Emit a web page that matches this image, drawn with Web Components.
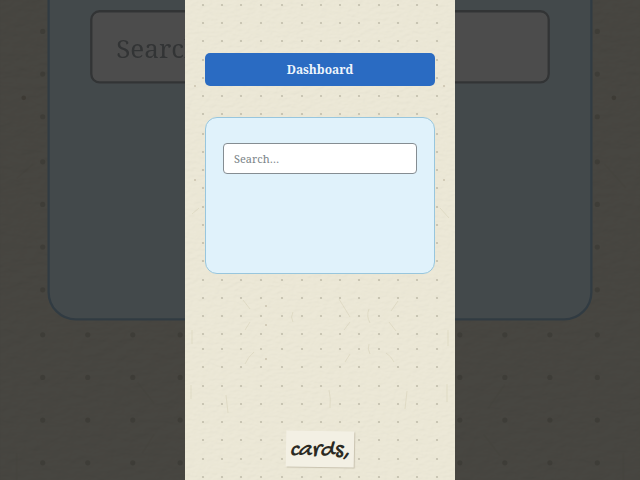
<!DOCTYPE html>
<html lang="en">
<head>
<meta charset="utf-8">
<meta name="viewport" content="width=device-width, initial-scale=1">
<title>Dashboard</title>
<style>
  body {
    margin: 0;
    font-family: "Noto Serif", "Droid Serif", "DejaVu Serif Condensed", "DejaVu Serif", serif;
  }
</style>
</head>
<body>
<video-stage>
  <portrait-frame slot="backdrop" inert aria-hidden="true">
    <search-card label="Search background"></search-card>
  </portrait-frame>
  <portrait-frame>
    <title-button slot="title">Dashboard</title-button>
    <search-card label="Search"></search-card>
    <caption-note slot="caption">cards,</caption-note>
  </portrait-frame>
</video-stage>

<script>
const define = (name, html, setup) => {
  const template = document.createElement("template")
  template.innerHTML = html

  customElements.define(name, class extends HTMLElement {
    constructor() {
      super()
      this.attachShadow({ mode: "open" })
      this.shadowRoot.appendChild(template.content.cloneNode(true))
    }

    connectedCallback() {
      if (setup) setup(this)
    }
  })
}

// a portrait frame in the middle, a dark enlarged copy behind it
define("video-stage", /*html*/ `
  <style>
    :host {
      display: flex;
      justify-content: center;
      position: relative;
      height: 100vh;
      overflow: hidden;
      background-color: #45433e;
    }
    .stage__backdrop {
      position: absolute;
      inset: 0;
      display: flex;
      justify-content: center;
      transform: scale(2.37);
      filter: brightness(.3);
      --dot-opacity: .3;
      --fibre-opacity: .15;
      --line-color: #a3c6db;
      --field-color: #a8adb0;
    }
    .stage__front {
      display: flex;
      position: relative;
    }
  </style>
  <div class="stage__backdrop"><slot name="backdrop"></slot></div>
  <main class="stage__front"><slot></slot></main>
`)

define("portrait-frame", /*html*/ `
  <style>
    :host {
      display: block;
      position: relative;
      height: 100vh;
      aspect-ratio: 9 / 16;
      overflow: hidden;
    }
    paper-sheet {
      position: absolute;
      inset: 0;
    }
    .frame {
      position: relative;
      box-sizing: border-box;
      display: flex;
      flex-direction: column;
      gap: 31px;
      height: 100%;
      padding: 53px 20px 13px;
    }
    .frame__title {
      min-height: 33px;
    }
    .frame__caption {
      display: flex;
      justify-content: center;
      margin-top: auto;
    }
  </style>
  <paper-sheet></paper-sheet>
  <div class="frame">
    <div class="frame__title"><slot name="title"></slot></div>
    <slot></slot>
    <div class="frame__caption"><slot name="caption"></slot></div>
  </div>
`)

// dotted paper, the dots are a little uneven like the print
const dotColumns = [18, 37, 56, 76, 97, 117, 136, 155, 174, 194, 213, 232, 252]
const dotRows = [5, 23, 41, 60, 78, 96, 114, 134, 152, 170, 188, 207, 225, 243, 261, 280, 298, 316, 334, 349, 367, 386, 404, 422, 440, 459, 477]

define("paper-sheet", /*html*/ `
  <style>
    :host {
      display: block;
      background-color: #ebe7d7;
    }
    svg {
      display: block;
      width: 100%;
      height: 100%;
    }
    #dots {
      opacity: var(--dot-opacity, .45);
    }
    #fibres {
      opacity: var(--fibre-opacity, .6);
    }
  </style>
  <svg viewBox="0 0 270 480" preserveAspectRatio="xMidYMid slice" aria-hidden="true">
    <filter id="grain" x="0" y="0" width="100%" height="100%">
      <feTurbulence type="fractalNoise" baseFrequency=".15 .3" numOctaves="3" seed="4" />
      <feDiffuseLighting surfaceScale=".4" lighting-color="#efebd9">
        <feDistantLight azimuth="235" elevation="75" />
      </feDiffuseLighting>
    </filter>
    <rect width="270" height="480" filter="url(#grain)" opacity=".6" />
    <g id="fibres" fill="none" stroke="#cfc9ae" stroke-width=".7">
      <path d="M58 300l7 9M65 322l-5 8M154 299l11 18M165 322l-6 8M213 301l-7 10M204 322l7 9M184 309q-3 7 1 14M108 312q-3 5 0 10" />
      <path d="M69 352q-6 5-9 12M165 354l-5 8M201 353q5 3 8 9M184 344q-2 5 1 10M144 390q2 8 1 18M222 391l-2 18M41 395l2 18M7 330v14M263 330v16" />
      <path d="M14 208l-7 6M255 208l9 10M6 385v14M262 384v18" />
    </g>
    <g id="dots" fill="#8f8b78"></g>
    <g fill="#9b8b72" opacity=".4">
      <circle cx="10" cy="86" r="1" /><circle cx="259" cy="86" r="1" />
      <circle cx="10" cy="180" r="1" /><circle cx="259" cy="180" r="1" />
      <circle cx="81" cy="306" r="1" /><circle cx="81" cy="325" r="1" />
      <circle cx="81" cy="359" r="1" />
    </g>
  </svg>
`, (el) => {
  let dots = ``
  dotRows.forEach((y) => {
    dotColumns.forEach((x) => {
      dots += `<circle cx="${x}" cy="${y}" r="1.1" />`
    })
  })
  el.shadowRoot.querySelector("#dots").innerHTML = dots
})

define("title-button", /*html*/ `
  <style>
    :host {
      display: block;
    }
    button {
      display: block;
      width: 100%;
      height: 33px;
      padding: 0;
      border: 0;
      border-radius: 5px;
      background-color: #2a6bc2;
      color: #edf5fc;
      font: bold 12px/16px "Noto Serif", "Droid Serif", "DejaVu Serif Condensed", "DejaVu Serif", serif;
      cursor: pointer;
    }
  </style>
  <button type="button"><slot></slot></button>
`)

define("search-card", /*html*/ `
  <style>
    :host {
      display: block;
      box-sizing: border-box;
      min-height: 157px;
      padding: 25px 17px;
      border: 1px solid var(--line-color, #98c6dd);
      border-radius: 12px;
      background-color: #e0f2fb;
    }
    input {
      display: block;
      box-sizing: border-box;
      width: 100%;
      height: 31px;
      padding: 0 10px;
      border: 1px solid var(--field-color, #858d92);
      border-radius: 4px;
      background-color: white;
      color: #444;
      font: 11px/16px "Noto Serif", "Droid Serif", "DejaVu Serif Condensed", "DejaVu Serif", serif;
    }
    input::placeholder {
      color: var(--field-color, #7b8488);
      opacity: 1;
    }
  </style>
  <input type="search" placeholder="Search…">
`, (el) => {
  el.shadowRoot.querySelector("input").setAttribute("aria-label", el.getAttribute("label"))
})

define("caption-note", /*html*/ `
  <style>
    :host {
      display: block;
      position: relative;
      padding: 8px 4px 4px;
      color: #2b2a22;
      font: italic 24px/24px "Gochi Hand", "Patrick Hand", Lato, sans-serif;
    }
    /* only the slip of paper is tilted, the word stays level */
    .note__paper {
      position: absolute;
      inset: 0;
      background-color: #f3f0e4;
      box-shadow: 1px 1px 1px #c9c3b0;
      transform: rotate(1deg);
    }
    .note__text {
      position: relative;
    }
  </style>
  <div class="note__paper"></div>
  <div class="note__text"><slot></slot></div>
`)
</script>
</body>
</html>
